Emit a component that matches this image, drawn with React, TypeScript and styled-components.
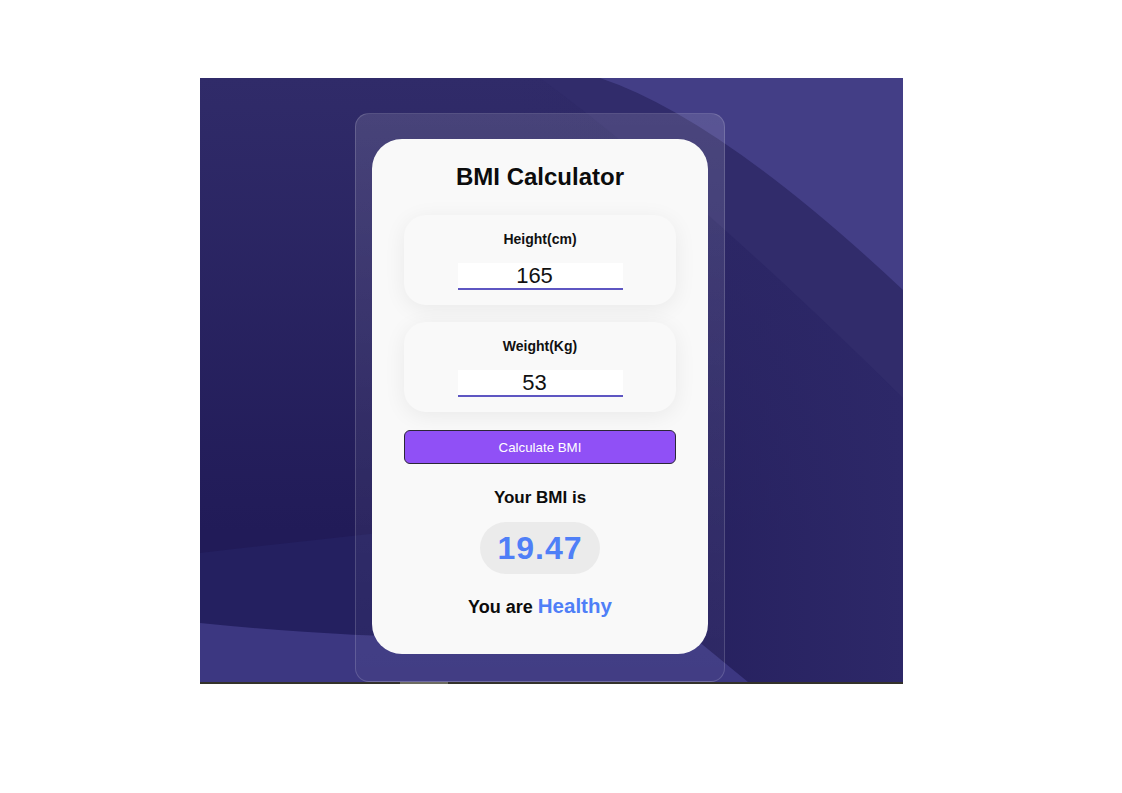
import React, { useState } from "react";
import styled, { createGlobalStyle } from "styled-components";

const GlobalStyle = createGlobalStyle`
  body {
    margin: 0;
    background: #ffffff;
    font-family: "Liberation Sans", Arial, sans-serif;
  }
`;

const Page = styled.div`
  padding: 78px 0 0 200px;
`;

const Stage = styled.div`
  position: relative;
  width: 703px;
  display: flex;
  flex-direction: column;
`;

const Backdrop = styled.svg`
  position: absolute;
  inset: 0;
  width: 703px;
  height: 604px;
  display: block;
`;

const StageBody = styled.div`
  position: relative;
  height: 604px;
  padding: 35px 0 0 155px;
  box-sizing: border-box;
`;

const ScrollTrack = styled.div`
  height: 2px;
  background: #34322b;
  display: flex;
  padding-left: 200px;
`;

const ScrollThumb = styled.div`
  width: 48px;
  background: #6d6c61;
`;

const Glass = styled.div`
  width: 370px;
  height: 569px;
  box-sizing: border-box;
  padding: 25px 16px 0;
  border-radius: 14px;
  border: 1px solid rgba(255, 255, 255, 0.16);
  background: linear-gradient(
    180deg,
    rgba(255, 255, 255, 0.12) 0%,
    rgba(255, 255, 255, 0.07) 50%,
    rgba(255, 255, 255, 0.03) 100%
  );
`;

const Card = styled.div`
  width: 336px;
  box-sizing: border-box;
  padding: 24px 32px 36px;
  border-radius: 30px;
  background: #f9f9f9;
  display: flex;
  flex-direction: column;
  align-items: center;
`;

const Title = styled.h1`
  margin: 0 0 24px;
  font-size: 24px;
  line-height: 28px;
  font-weight: 700;
  color: #0c0c0c;
`;

const Field = styled.label<{ $last?: boolean }>`
  width: 272px;
  height: 90px;
  box-sizing: border-box;
  padding-top: 16px;
  margin-bottom: ${(p) => (p.$last ? "18px" : "17px")};
  border-radius: 22px;
  background: #f9f9f9;
  box-shadow: 0 4px 22px rgba(0, 0, 0, 0.065);
  display: flex;
  flex-direction: column;
  align-items: center;
  gap: 16px;
`;

const FieldLabel = styled.span`
  font-size: 14px;
  line-height: 16px;
  font-weight: 700;
  color: #111;
`;

const NumberInput = styled.input`
  width: 165px;
  height: 27px;
  box-sizing: border-box;
  padding: 0 11px 0 0;
  border: none;
  border-bottom: 2px solid #5e56c2;
  background: #ffffff;
  outline: none;
  text-align: center;
  font-family: "Liberation Sans", Arial, sans-serif;
  font-size: 22px;
  color: #111;
`;

const CalcButton = styled.button`
  width: 272px;
  height: 34px;
  margin-bottom: 24px;
  border: 1px solid #2c2738;
  border-radius: 6px;
  background: #9050f6;
  color: #ffffff;
  font-family: "Liberation Sans", Arial, sans-serif;
  font-size: 13.3px;
  cursor: pointer;
`;

const ResultHeading = styled.div`
  font-size: 17px;
  line-height: 20px;
  font-weight: 700;
  color: #0c0c0c;
  margin-bottom: 14px;
`;

const ResultPill = styled.div`
  height: 52px;
  box-sizing: border-box;
  padding: 8px 17px;
  border-radius: 26px;
  background: #ebebeb;
  font-size: 32px;
  line-height: 36px;
  font-weight: 700;
  letter-spacing: 1px;
  color: #4f7ff7;
  margin-bottom: 22px;
`;

const Verdict = styled.div`
  font-size: 18px;
  line-height: 22px;
  font-weight: 700;
  color: #0c0c0c;
`;

const VerdictWord = styled.span`
  font-size: 20.5px;
  line-height: 1;
  color: #4f7ff7;
`;

const categorize = (bmi: number) => {
  if (bmi < 18.5) return "Underweight";
  if (bmi < 25) return "Healthy";
  if (bmi < 30) return "Overweight";
  return "Obese";
};

const compute = (h: string, w: string) => {
  const m = parseFloat(h) / 100;
  const kg = parseFloat(w);
  if (!m || !kg) return 0;
  return kg / (m * m);
};

export default function App() {
  const [height, setHeight] = useState("165");
  const [weight, setWeight] = useState("53");
  const [bmi, setBmi] = useState(() => compute("165", "53"));

  return (
    <>
      <GlobalStyle />
      <Page>
        <Stage>
          <Backdrop viewBox="0 0 703 604" preserveAspectRatio="none">
            <defs>
              <linearGradient id="base" x1="0" y1="0" x2="0" y2="1">
                <stop offset="0" stopColor="#302b69" />
                <stop offset="0.75" stopColor="#211b58" />
              </linearGradient>
              <linearGradient id="side" x1="0" y1="0" x2="1" y2="0">
                <stop offset="0.45" stopColor="#2d2868" stopOpacity="0" />
                <stop offset="1" stopColor="#2d2868" stopOpacity="1" />
              </linearGradient>
            </defs>
            <rect width="703" height="604" fill="url(#base)" />
            <rect width="703" height="604" fill="url(#side)" />
            <path d="M0 475 Q 200 452 430 428 L 430 604 L 0 604 Z" fill="#242060" />
            <path
              d="M0 545 C 150 560 300 566 420 548 Q 470 542 492 558 L 548 604 L 0 604 Z"
              fill="#3c3781"
            />
            <path d="M340 0 Q 490 110 703 320 L 703 0 Z" fill="#312c6b" />
            <path d="M400 0 Q 520 40 703 212 L 703 0 Z" fill="#433e86" />
          </Backdrop>
          <StageBody>
            <Glass>
              <Card>
                <Title>BMI Calculator</Title>
                <Field>
                  <FieldLabel>Height(cm)</FieldLabel>
                  <NumberInput value={height} onChange={(e) => setHeight(e.target.value)} />
                </Field>
                <Field $last>
                  <FieldLabel>Weight(Kg)</FieldLabel>
                  <NumberInput value={weight} onChange={(e) => setWeight(e.target.value)} />
                </Field>
                <CalcButton onClick={() => setBmi(compute(height, weight))}>Calculate BMI</CalcButton>
                <ResultHeading>Your BMI is</ResultHeading>
                <ResultPill>{bmi.toFixed(2)}</ResultPill>
                <Verdict>
                  You are <VerdictWord>{categorize(bmi)}</VerdictWord>
                </Verdict>
              </Card>
            </Glass>
          </StageBody>
          <ScrollTrack>
            <ScrollThumb />
          </ScrollTrack>
        </Stage>
      </Page>
    </>
  );
}
